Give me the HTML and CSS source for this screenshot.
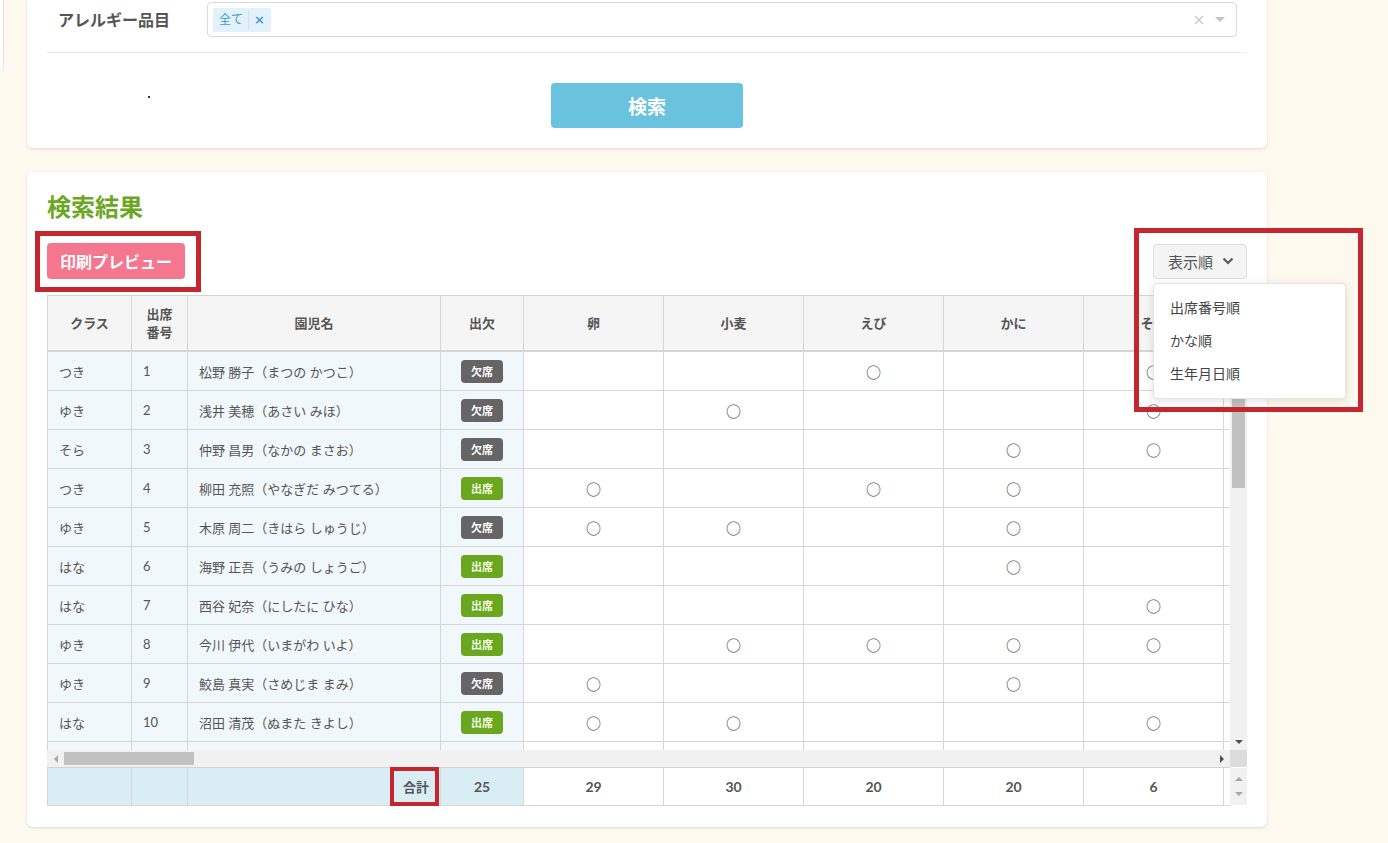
FILE: index.html
```html
<!DOCTYPE html>
<html lang="ja">
<head>
<meta charset="utf-8">
<title>検索結果</title>
<link rel="stylesheet" href="styles.css">
</head>
<body>
<div class="edge"></div>
<div class="page">
  <section class="card card-search">
    <div class="form-row">
      <div class="form-label">アレルギー品目</div>
      <div class="select">
        <span class="tag"><span class="tag-text">全て</span><span class="tag-x">×</span></span>
        <span class="select-icons">
          <svg class="ico-clear" width="10" height="10" viewBox="0 0 10 10"><path d="M1 1 L9 9 M9 1 L1 9" stroke="#c8c8c8" stroke-width="1.4" fill="none"/></svg>
          <svg class="ico-caret" width="10" height="6" viewBox="0 0 10 6"><path d="M0 0 L10 0 L5 5 Z" fill="#c4c4c4"/></svg>
        </span>
      </div>
    </div>
    <div class="btn-row">
      <span class="dot"></span>
      <button class="btn-search">検索</button>
    </div>
  </section>

  <section class="card card-result">
    <h2 class="result-title">検索結果</h2>
    <div class="toolbar">
      <button class="btn-print">印刷プレビュー</button>
      <div class="sort-wrap">
        <button class="btn-sort">表示順
          <svg width="12" height="8" viewBox="0 0 12 8"><path d="M1.5 1.5 L6 6 L10.5 1.5" stroke="#555" stroke-width="2" fill="none"/></svg>
        </button>
        <div class="menu">
          <div class="menu-item">出席番号順</div>
          <div class="menu-item">かな順</div>
          <div class="menu-item">生年月日順</div>
        </div>
      </div>
    </div>

    <div class="dt">
      <div class="dt-head">
        <div class="grow">
          <div class="c h">クラス</div>
          <div class="c h">出席<br>番号</div>
          <div class="c h">園児名</div>
          <div class="c h">出欠</div>
          <div class="c h">卵</div>
          <div class="c h">小麦</div>
          <div class="c h">えび</div>
          <div class="c h">かに</div>
          <div class="c h">そば</div>
          <div class="c h"></div>
        </div>
      </div>

      <div class="dt-mid">
        <div class="dt-body">
          <div class="grow">
            <div class="c fix">つき</div><div class="c fix num">1</div><div class="c fix">松野 勝子（まつの かつこ）</div><div class="c fix ctr"><span class="badge absent">欠席</span></div>
            <div class="c ctr"></div><div class="c ctr"></div><div class="c ctr"><span class="mk">○</span></div><div class="c ctr"></div><div class="c ctr"><span class="mk">○</span></div><div class="c ctr"></div>

            <div class="c fix">ゆき</div><div class="c fix num">2</div><div class="c fix">浅井 美穂（あさい みほ）</div><div class="c fix ctr"><span class="badge absent">欠席</span></div>
            <div class="c ctr"></div><div class="c ctr"><span class="mk">○</span></div><div class="c ctr"></div><div class="c ctr"></div><div class="c ctr"><span class="mk">○</span></div><div class="c ctr"></div>

            <div class="c fix">そら</div><div class="c fix num">3</div><div class="c fix">仲野 昌男（なかの まさお）</div><div class="c fix ctr"><span class="badge absent">欠席</span></div>
            <div class="c ctr"></div><div class="c ctr"></div><div class="c ctr"></div><div class="c ctr"><span class="mk">○</span></div><div class="c ctr"><span class="mk">○</span></div><div class="c ctr"></div>

            <div class="c fix">つき</div><div class="c fix num">4</div><div class="c fix">柳田 充照（やなぎだ みつてる）</div><div class="c fix ctr"><span class="badge present">出席</span></div>
            <div class="c ctr"><span class="mk">○</span></div><div class="c ctr"></div><div class="c ctr"><span class="mk">○</span></div><div class="c ctr"><span class="mk">○</span></div><div class="c ctr"></div><div class="c ctr"></div>

            <div class="c fix">ゆき</div><div class="c fix num">5</div><div class="c fix">木原 周二（きはら しゅうじ）</div><div class="c fix ctr"><span class="badge absent">欠席</span></div>
            <div class="c ctr"><span class="mk">○</span></div><div class="c ctr"><span class="mk">○</span></div><div class="c ctr"></div><div class="c ctr"><span class="mk">○</span></div><div class="c ctr"></div><div class="c ctr"></div>

            <div class="c fix">はな</div><div class="c fix num">6</div><div class="c fix">海野 正吾（うみの しょうご）</div><div class="c fix ctr"><span class="badge present">出席</span></div>
            <div class="c ctr"></div><div class="c ctr"></div><div class="c ctr"></div><div class="c ctr"><span class="mk">○</span></div><div class="c ctr"></div><div class="c ctr"></div>

            <div class="c fix">はな</div><div class="c fix num">7</div><div class="c fix">西谷 妃奈（にしたに ひな）</div><div class="c fix ctr"><span class="badge present">出席</span></div>
            <div class="c ctr"></div><div class="c ctr"></div><div class="c ctr"></div><div class="c ctr"></div><div class="c ctr"><span class="mk">○</span></div><div class="c ctr"></div>

            <div class="c fix">ゆき</div><div class="c fix num">8</div><div class="c fix">今川 伊代（いまがわ いよ）</div><div class="c fix ctr"><span class="badge present">出席</span></div>
            <div class="c ctr"></div><div class="c ctr"><span class="mk">○</span></div><div class="c ctr"><span class="mk">○</span></div><div class="c ctr"><span class="mk">○</span></div><div class="c ctr"><span class="mk">○</span></div><div class="c ctr"></div>

            <div class="c fix">ゆき</div><div class="c fix num">9</div><div class="c fix">鮫島 真実（さめじま まみ）</div><div class="c fix ctr"><span class="badge absent">欠席</span></div>
            <div class="c ctr"><span class="mk">○</span></div><div class="c ctr"></div><div class="c ctr"></div><div class="c ctr"><span class="mk">○</span></div><div class="c ctr"></div><div class="c ctr"></div>

            <div class="c fix">はな</div><div class="c fix num">10</div><div class="c fix">沼田 清茂（ぬまた きよし）</div><div class="c fix ctr"><span class="badge present">出席</span></div>
            <div class="c ctr"><span class="mk">○</span></div><div class="c ctr"><span class="mk">○</span></div><div class="c ctr"></div><div class="c ctr"></div><div class="c ctr"><span class="mk">○</span></div><div class="c ctr"></div>

            <div class="c fix"></div><div class="c fix num"></div><div class="c fix"></div><div class="c fix ctr top"><span class="badge present blank"></span></div>
            <div class="c ctr"></div><div class="c ctr"></div><div class="c ctr"></div><div class="c ctr"></div><div class="c ctr"></div><div class="c ctr"></div>
          </div>
        </div>
        <div class="vscroll">
          <div class="sb-btn"><span class="tri up"></span></div>
          <div class="v-thumb"></div>
          <div class="sb-fill"></div>
          <div class="sb-btn"><span class="tri down"></span></div>
        </div>
      </div>

      <div class="dt-hs">
        <div class="hs-track">
          <div class="sb-btn"><span class="tri left dim"></span></div>
          <div class="h-thumb"></div>
          <div class="sb-fill"></div>
          <div class="sb-btn"><span class="tri right"></span></div>
        </div>
        <div class="corner"></div>
      </div>

      <div class="dt-foot">
        <div class="foot-view">
          <div class="grow">
            <div class="c f fix"></div><div class="c f fix"></div><div class="c f fix right">合計</div><div class="c f fix ctr">25</div>
            <div class="c f ctr">29</div><div class="c f ctr">30</div><div class="c f ctr">20</div><div class="c f ctr">20</div><div class="c f ctr">6</div><div class="c f ctr"></div>
          </div>
        </div>
        <div class="foot-side">
          <span class="tri up dim small"></span>
          <span class="tri down dim small"></span>
        </div>
      </div>
    </div>
  </section>
</div>

<div class="mark mark-print"></div>
<div class="mark mark-sort"></div>
<div class="mark mark-total"></div>
</body>
</html>
```

FILE: styles.css
```css
html, body {
  margin: 0;
  padding: 0;
}
body {
  position: relative;
  width: 1388px;
  height: 843px;
  overflow: hidden;
  background: #fdf9ee;
  font-family: Lato, "Noto Sans CJK JP", sans-serif;
  color: #555;
}
button {
  font-family: Lato, "Noto Sans CJK JP", sans-serif;
  cursor: pointer;
}

.edge {
  position: absolute;
  left: 0;
  top: 0;
  width: 3px;
  height: 70px;
  background: #fff;
  border-right: 1px solid #e6e6e6;
  border-bottom: 1px solid #ececec;
}

.page {
  padding-left: 27px;
  width: 1240px;
}

.card {
  background: #fff;
  border-radius: 6px;
  box-shadow: 0 1px 3px rgba(0, 0, 0, 0.13);
  padding: 0 20px;
}

/* search card */
.card-search {
  border-radius: 0 0 6px 6px;
  padding-bottom: 20px;
}
.form-row {
  display: flex;
  align-items: flex-start;
  padding: 2px 0 15px;
  border-bottom: 1px solid #e9e9e9;
}
.form-label {
  width: 160px;
  box-sizing: border-box;
  padding-left: 11px;
  line-height: 35px;
  font-size: 16px;
  font-weight: bold;
  color: #555;
}
.select {
  width: 1030px;
  height: 35px;
  box-sizing: border-box;
  border: 1px solid #d9d9d9;
  border-radius: 4px;
  display: flex;
  align-items: center;
  padding: 0 11px 0 5px;
}
.tag {
  display: flex;
  align-items: center;
  height: 24px;
  background: #e3f1fa;
  color: #3b9ad0;
  font-size: 12px;
  border-radius: 2px;
}
.tag-text {
  padding: 0 5px 0 6px;
  line-height: 18px;
  border-right: 1px solid #cbe4f3;
}
.tag-x {
  padding: 0 6px 0 5px;
  font-weight: bold;
  font-size: 13px;
  font-family: "DejaVu Sans", sans-serif;
}
.select-icons {
  margin-left: auto;
  display: flex;
  align-items: center;
  gap: 11px;
}

.btn-row {
  position: relative;
  display: flex;
  justify-content: center;
  padding-top: 30px;
}
.dot {
  position: absolute;
  left: 101px;
  top: 43px;
  width: 2px;
  height: 2px;
  background: #333;
}
.btn-search {
  width: 192px;
  height: 45px;
  border: none;
  border-radius: 4px;
  background: #69c2de;
  color: #fff;
  font-size: 19px;
  font-weight: bold;
}

/* result card */
.card-result {
  margin-top: 24px;
  padding-top: 20px;
  padding-bottom: 21px;
}
.result-title {
  margin: 0;
  font-size: 24px;
  line-height: 30px;
  font-weight: bold;
  color: #6ba723;
}
.toolbar {
  margin-top: 21px;
  height: 36px;
  display: flex;
  justify-content: space-between;
  align-items: center;
}
.btn-print {
  width: 138px;
  height: 36px;
  border: none;
  border-radius: 4px;
  background: #f4778f;
  color: #fff;
  font-size: 16px;
  font-weight: bold;
  padding: 0;
}
.sort-wrap {
  position: relative;
}
.btn-sort {
  width: 94px;
  height: 35px;
  box-sizing: border-box;
  background: #f4f4f4;
  border: 1px solid #dcdcdc;
  border-radius: 4px;
  color: #555;
  font-size: 15px;
  display: flex;
  align-items: center;
  justify-content: center;
  gap: 9px;
  padding: 0 0 0 2px;
}
.menu {
  position: absolute;
  left: 0;
  top: 39px;
  width: 193px;
  box-sizing: border-box;
  background: #fff;
  border: 1px solid #e4e4e4;
  border-radius: 4px;
  box-shadow: 0 2px 8px rgba(0, 0, 0, 0.12);
  padding: 7px 0 8px;
  z-index: 5;
}
.menu-item {
  height: 33px;
  line-height: 33px;
  padding-left: 16px;
  font-size: 14px;
  color: #444;
}

/* table */
.dt {
  margin-top: 16px;
  width: 1200px;
}
.grow {
  display: grid;
  grid-template-columns: 84px 56px 253px 83px repeat(6, 140px);
  width: max-content;
}
.c {
  box-sizing: border-box;
  height: 39px;
  border-right: 1px solid #d6d6d6;
  border-bottom: 1px solid #d6d6d6;
  display: flex;
  align-items: center;
  padding: 0 11px;
  font-size: 13px;
  color: #555;
  white-space: nowrap;
  background: #fff;
}
.c.fix {
  background: #f1f8fb;
}
.c.ctr {
  justify-content: center;
}
.c.top {
  align-items: flex-start;
  padding-top: 8px;
}
.c.h {
  height: 56px;
  border-bottom: 2px solid #d6d6d6;
  background: #f5f5f5;
  font-weight: bold;
  justify-content: center;
  text-align: center;
  line-height: 18px;
  padding: 0 4px;
}
.dt-head {
  width: 1200px;
  box-sizing: border-box;
  overflow: hidden;
  border-top: 1px solid #d3d3d3;
  border-left: 1px solid #d3d3d3;
  background: #f5f5f5;
}
.dt-mid {
  display: flex;
}
.dt-body {
  width: 1183px;
  height: 398px;
  box-sizing: border-box;
  overflow: hidden;
  border-left: 1px solid #d3d3d3;
}
.badge {
  display: inline-block;
  height: 23px;
  line-height: 23px;
  padding: 0 10px;
  border-radius: 4px;
  font-size: 11px;
  font-weight: bold;
  color: #fff;
}
.badge.blank {
  width: 22px;
}
.badge.absent {
  background: #656565;
}
.badge.present {
  background: #6aa71f;
  color: #f4ffe6;
}
.mk {
  font-family: "Noto Sans CJK JP", sans-serif;
  font-size: 15px;
  color: #444;
  line-height: 1;
}

/* fake scrollbars */
.vscroll {
  width: 17px;
  height: 398px;
  background: #f1f1f1;
  display: flex;
  flex-direction: column;
}
.sb-btn {
  width: 17px;
  height: 17px;
  flex: none;
  display: flex;
  align-items: center;
  justify-content: center;
}
.sb-fill {
  flex: 1;
}
.v-thumb {
  width: 13px;
  height: 119px;
  margin-left: 2px;
  background: #c1c1c1;
}
.tri {
  width: 0;
  height: 0;
  display: block;
}
.tri.up {
  border-left: 4px solid transparent;
  border-right: 4px solid transparent;
  border-bottom: 4px solid #505050;
}
.tri.down {
  border-left: 4px solid transparent;
  border-right: 4px solid transparent;
  border-top: 4px solid #505050;
}
.tri.left {
  border-top: 4px solid transparent;
  border-bottom: 4px solid transparent;
  border-right: 4px solid #505050;
}
.tri.right {
  border-top: 4px solid transparent;
  border-bottom: 4px solid transparent;
  border-left: 4px solid #505050;
}
.tri.up.dim { border-bottom-color: #a8a8a8; }
.tri.down.dim { border-top-color: #a8a8a8; }
.tri.left.dim { border-right-color: #a8a8a8; }

.dt-hs {
  display: flex;
  height: 17px;
}
.hs-track {
  width: 1183px;
  background: #f1f1f1;
  display: flex;
  align-items: center;
}
.h-thumb {
  width: 130px;
  height: 13px;
  background: #c1c1c1;
}
.corner {
  width: 17px;
  background: #dcdcdc;
}

.dt-foot {
  display: flex;
}
.foot-view {
  width: 1183px;
  box-sizing: border-box;
  overflow: hidden;
  border-top: 1px solid #d3d3d3;
  border-left: 1px solid #d3d3d3;
}
.c.f {
  height: 38px;
  font-weight: bold;
  font-size: 14px;
}
.c.f.fix {
  background: #d9edf5;
}
.c.f.right {
  justify-content: flex-end;
  font-size: 13px;
}
.foot-side {
  width: 17px;
  height: 37px;
  margin-top: 1px;
  background: #f1f1f1;
  display: flex;
  flex-direction: column;
  align-items: center;
  justify-content: space-around;
  padding: 4px 0;
  box-sizing: border-box;
}

/* annotation marks */
.mark {
  position: absolute;
  box-sizing: border-box;
  border: 5px solid #c4262e;
  z-index: 10;
}
.mark-print {
  left: 35px;
  top: 231px;
  width: 166px;
  height: 61px;
}
.mark-sort {
  left: 1134px;
  top: 228px;
  width: 229px;
  height: 184px;
}
.mark-total {
  left: 390px;
  top: 767px;
  width: 49px;
  height: 39px;
  border-width: 4px;
}
```
